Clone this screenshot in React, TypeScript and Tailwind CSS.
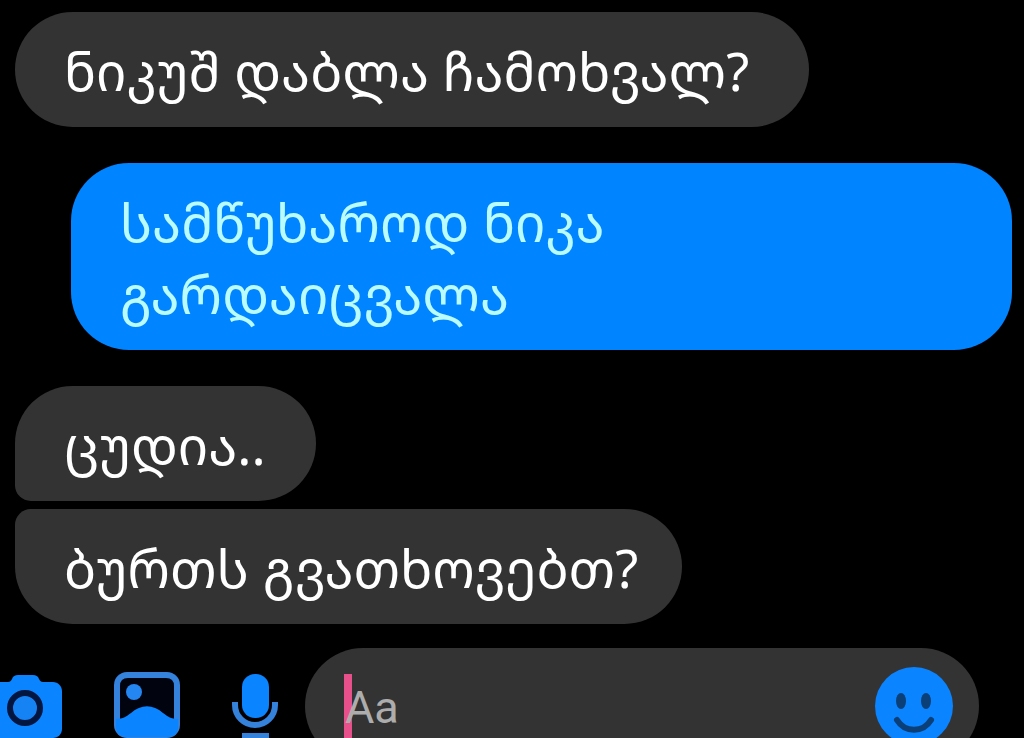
import clsx from "clsx";

type Message = {
  text: string;
  mine?: boolean;
  shape: string;
};

const messages: Message[] = [
  { text: "ნიკუშ დაბლა ჩამოხვალ?", shape: "rounded-[58px] pr-[60px]" },
  { text: "სამწუხაროდ ნიკა გარდაიცვალა", mine: true, shape: "mt-9 rounded-[58px] pr-[50px]" },
  { text: "ცუდია..", shape: "mt-9 rounded-[58px] rounded-bl-[16px] pr-[50px]" },
  { text: "ბურთს გვათხოვებთ?", shape: "mt-2 rounded-[58px] rounded-tl-[16px] pr-[44px]" },
];

function Bubble({ text, mine, shape }: Message) {
  return (
    <li
      className={clsx(
        "pl-[49px] pt-[22px] pb-[21px] text-[53px] leading-[72px]",
        mine
          ? "ml-14 self-stretch bg-[#0084ff] text-[#b9fbff]"
          : "self-start bg-[#333333] text-white",
        shape
      )}
    >
      {text}
    </li>
  );
}

function CameraIcon() {
  return (
    <svg viewBox="0 0 74 64" className="h-16 w-[74px]" aria-hidden="true">
      <path
        d="M9 8h11c2 0 3-1 4-3 1-3 3-4 6-4h15c3 0 5 1 6 4 1 2 2 3 4 3h10c5 0 9 4 9 9v38c0 5-4 9-9 9H9c-5 0-9-4-9-9V17c0-5 4-9 9-9z"
        fill="#0a84ff"
      />
      <circle cx="37" cy="34" r="15" fill="#1683f5" stroke="#03163f" strokeWidth="6" />
    </svg>
  );
}

function GalleryIcon() {
  return (
    <svg viewBox="0 0 66 66" className="h-[66px] w-[66px]" aria-hidden="true">
      <rect width="66" height="66" rx="13" fill="#3482dc" />
      <path d="M6 14q0-8 8-8h38q8 0 8 8v38H6z" fill="#01040f" />
      <path d="M2 47c7 0 11-3 15-6 10-9 22-9 32 0 4 3 8 6 15 6v7q0 11-11 11H13Q2 65 2 54z" fill="#0a84ff" />
      <circle cx="20" cy="20" r="8" fill="#2486f0" />
    </svg>
  );
}

function MicIcon() {
  return (
    <svg viewBox="0 0 46 64" className="h-16 w-[46px]" aria-hidden="true">
      <rect x="10" y="0" width="27" height="44" rx="13" fill="#0a84ff" />
      <path d="M3 28v3a20 20 0 0 0 40 0v-3" fill="none" stroke="#3482dc" strokeWidth="6" />
      <rect x="10" y="59" width="27" height="5" fill="#3482dc" />
    </svg>
  );
}

function SmileIcon() {
  return (
    <svg viewBox="0 0 78 78" className="h-[78px] w-[78px]" aria-hidden="true">
      <circle cx="39" cy="39" r="39" fill="#0a84ff" />
      <ellipse cx="26" cy="34" rx="5" ry="8" fill="#0b3f78" />
      <ellipse cx="51" cy="34" rx="5" ry="8" fill="#0b3f78" />
      <path d="M22 53c8 13 26 13 34 0" fill="none" stroke="#0b3f78" strokeWidth="6" strokeLinecap="round" />
    </svg>
  );
}

function Composer() {
  return (
    <form className="mt-6 flex shrink-0 items-start pr-[45px]">
      <button type="button" aria-label="Camera" className="-ml-3 mt-[26px] shrink-0">
        <CameraIcon />
      </button>
      <button type="button" aria-label="Gallery" className="ml-[52px] mt-6 shrink-0">
        <GalleryIcon />
      </button>
      <button type="button" aria-label="Voice message" className="ml-[52px] mt-[26px] shrink-0">
        <MicIcon />
      </button>

      <div className="relative ml-[27px] flex h-[116px] min-w-0 flex-1 items-center rounded-full bg-[#333333] pl-10 pr-[26px]">
        {/* Text cursor */}
        <span className="absolute left-[39px] top-[26px] h-16 w-2 bg-[#e8508c]" />
        <input
          type="text"
          aria-label="Message"
          placeholder="Aa"
          className="relative mt-1 min-w-0 flex-1 bg-transparent font-[Roboto,sans-serif] text-[45px] leading-[64px] text-white outline-none placeholder:text-[#adadad]"
        />
        <button type="button" aria-label="Emoji" className="shrink-0">
          <SmileIcon />
        </button>
      </div>
    </form>
  );
}

export default function App() {
  return (
    <main className="flex h-screen flex-col overflow-hidden bg-black pt-3 font-['Noto_Sans_Georgian','Noto_Sans','DejaVu_Sans',sans-serif]">
      <ul className="flex shrink-0 flex-col pl-[15px] pr-3">
        {messages.map((message) => (
          <Bubble key={message.text} {...message} />
        ))}
      </ul>
      <Composer />
    </main>
  );
}
